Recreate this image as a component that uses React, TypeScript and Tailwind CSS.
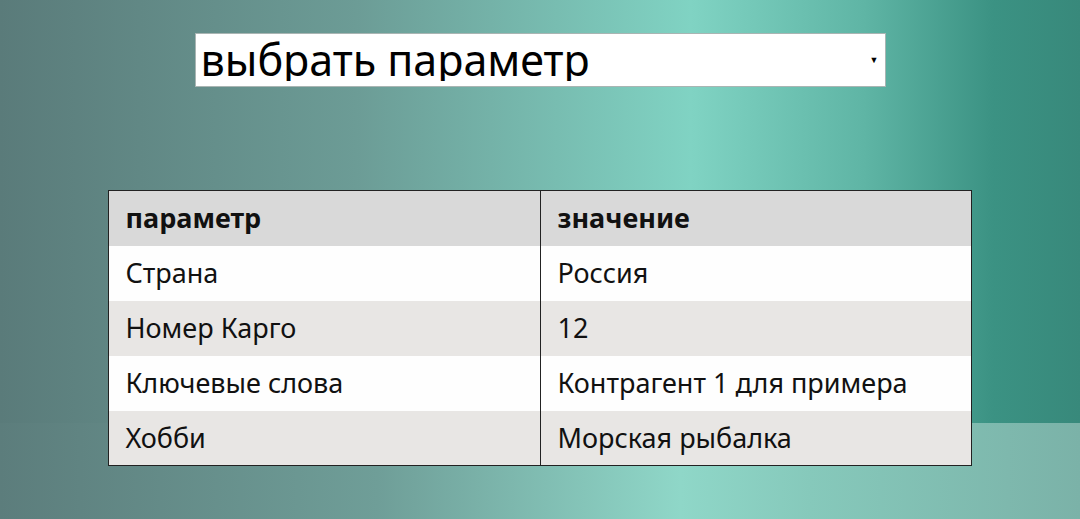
import React, { useState } from "react";

const rows = [
  { param: "Страна", value: "Россия" },
  { param: "Номер Карго", value: "12" },
  { param: "Ключевые слова", value: "Контрагент 1 для примера" },
  { param: "Хобби", value: "Морская рыбалка" },
];

export default function App(): React.JSX.Element {
  const [selected, setSelected] = useState("");

  return (
    <div
      className="min-h-screen bg-[linear-gradient(to_right,#5c7d7c_0%,#6f9e98_35%,#8fd7c8_63%,#86c9bb_75%,#7bb2a8_100%)]"
      style={{ fontFamily: '"Noto Sans", "Open Sans", sans-serif' }}
    >
      <div className="h-[423px] bg-[linear-gradient(to_right,#5a7b7a_0%,#6c9c96_33%,#80d3c3_64%,#5fb5a5_80%,#3b9283_92%,#38897b_100%)] pt-[33px] flex flex-col items-center">
        <div className="relative shrink-0 w-[691px] h-[54px] bg-white border border-[#a9b5b3]">
          <select
            value={selected}
            onChange={(e) => setSelected(e.target.value)}
            className="w-full h-full appearance-none bg-transparent pl-[5px] pb-[2px] text-[43px] leading-none text-black outline-none"
          >
            <option value="">выбрать параметр</option>
            <option value="country">Страна</option>
            <option value="cargo">Номер Карго</option>
            <option value="keywords">Ключевые слова</option>
            <option value="hobby">Хобби</option>
          </select>
          <span className="pointer-events-none absolute right-[6px] top-[19px] text-[9px] text-black">
            ▼
          </span>
        </div>

        <table className="mt-[103px] ml-[-1px] w-[864px] border-collapse border border-[#222] text-[27px] text-[#111] shrink-0">
          <thead>
            <tr className="bg-[#d9d9d9] h-[55px]">
              <th className="w-[432px] border-r border-[#222] pl-[17px] text-left font-bold">
                параметр
              </th>
              <th className="pl-[17px] text-left font-bold">значение</th>
            </tr>
          </thead>
          <tbody>
            {rows.map((row, i) => (
              <tr
                key={row.param}
                className={i % 2 === 0 ? "bg-[#fefefe] h-[55px]" : "bg-[#e8e6e4] h-[55px]"}
              >
                <td className="border-r border-[#222] pl-[17px]">{row.param}</td>
                <td className="pl-[17px]">{row.value}</td>
              </tr>
            ))}
          </tbody>
        </table>
      </div>
    </div>
  );
}
